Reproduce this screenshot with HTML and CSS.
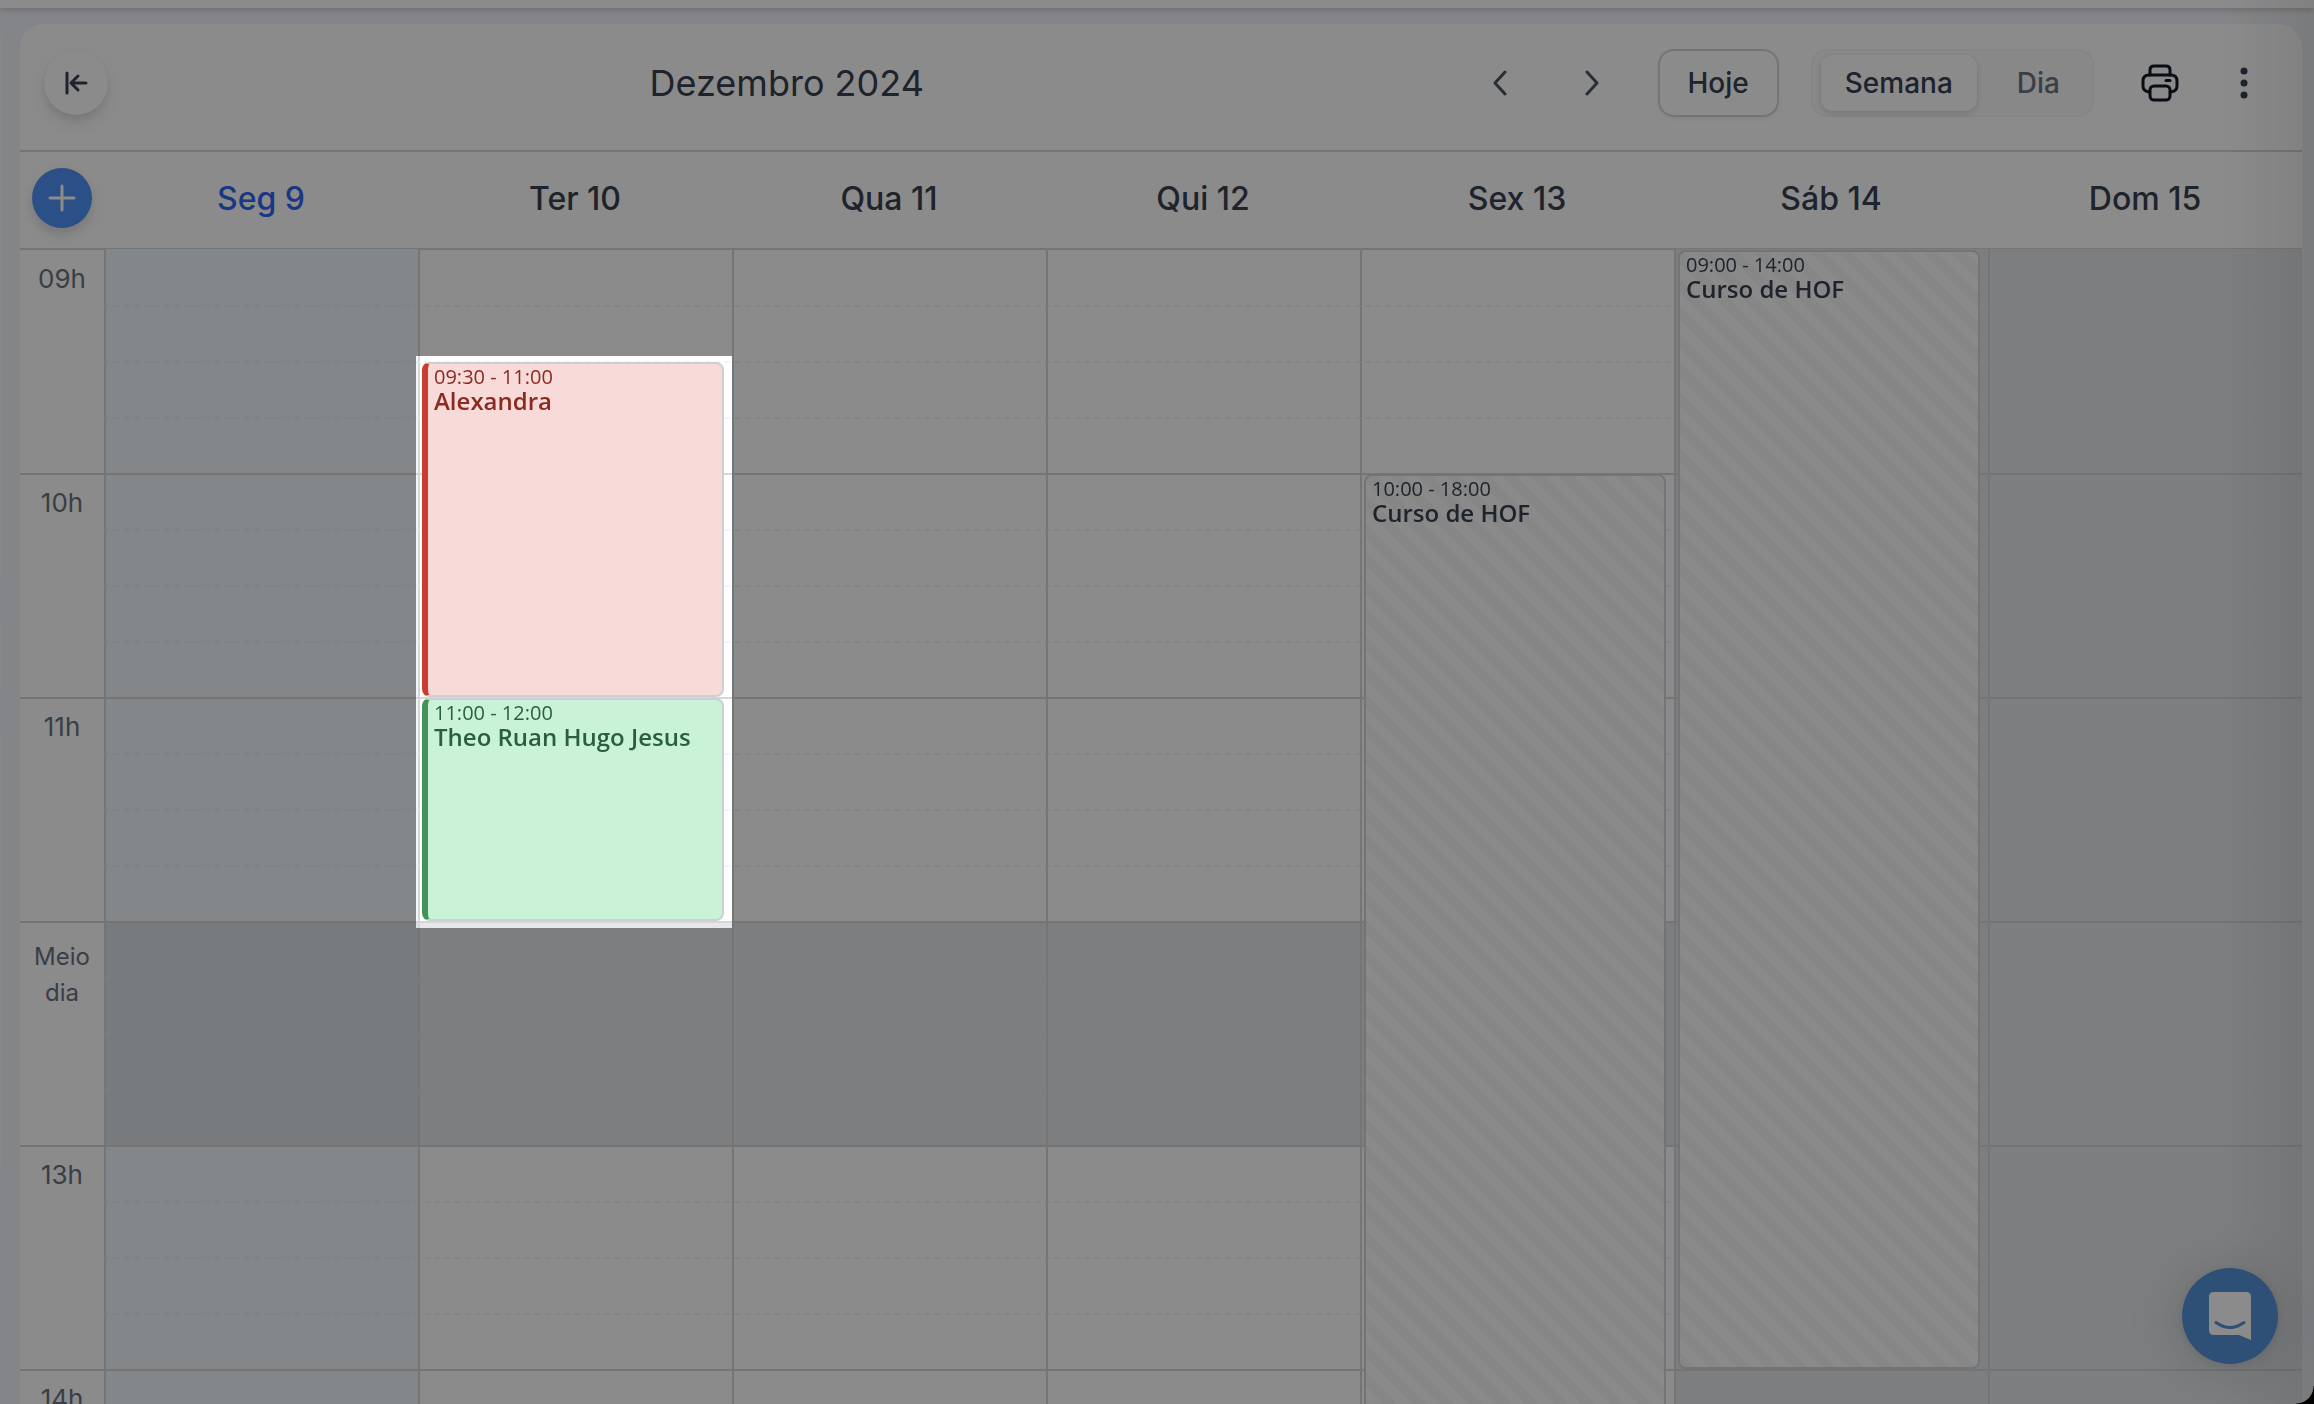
FILE: index.html
```
<!DOCTYPE html>
<html lang="pt-BR">
<head>
    <meta charset="UTF-8">
    <meta name="viewport" content="width=device-width, initial-scale=1.0">
    <title>Agenda</title>
    <link rel="stylesheet" href="styles.css">
</head>
<body>
    <div class="topbar"></div>
    <div class="page">
        <aside class="sidebar">
            <div class="panel"></div>
            <div class="panel small"></div>
            <div class="panel"></div>
        </aside>
        <main class="calendar">
            <header class="toolbar">
                <button type="button" class="btn-collapse" aria-label="Recolher menu">
                    <svg width="24" height="24" viewBox="0 0 24 24" fill="none" stroke="currentColor" stroke-width="3" stroke-linecap="round" stroke-linejoin="round">
                        <path d="M3 2v20M22 12H7M14 5l-7 7 7 7"/>
                    </svg>
                </button>
                <h1 class="title">Dezembro 2024</h1>
                <nav class="arrows">
                    <button type="button" class="btn-icon" aria-label="Semana anterior">
                        <svg width="16" height="26" viewBox="0 0 16 26" fill="none" stroke="currentColor" stroke-width="3" stroke-linecap="round" stroke-linejoin="round">
                            <path d="M13 2L3 13l10 11"/>
                        </svg>
                    </button>
                    <button type="button" class="btn-icon" aria-label="Próxima semana">
                        <svg width="16" height="26" viewBox="0 0 16 26" fill="none" stroke="currentColor" stroke-width="3" stroke-linecap="round" stroke-linejoin="round">
                            <path d="M3 2l10 11L3 24"/>
                        </svg>
                    </button>
                </nav>
                <button type="button" class="btn-today">Hoje</button>
                <div class="view-switch">
                    <button type="button" class="active">Semana</button>
                    <button type="button">Dia</button>
                </div>
                <div class="actions">
                    <button type="button" class="btn-icon btn-print" aria-label="Imprimir">
                        <svg width="38" height="38" viewBox="0 0 38 38" fill="none" stroke="currentColor" stroke-width="3" stroke-linecap="round" stroke-linejoin="round">
                            <path d="M9 11V6q0-4 4-4h12q4 0 4 4v5"/>
                            <path d="M8 28q-6-1-6-6v-5q0-6 6-6h22q6 0 6 6v5q0 5-6 6"/>
                            <rect x="9" y="22" width="20" height="14" rx="4"/>
                            <path d="M25 16.500h4"/>
                        </svg>
                    </button>
                    <button type="button" class="btn-icon btn-more" aria-label="Mais opções">
                        <svg width="8" height="32" viewBox="0 0 8 32" fill="currentColor">
                            <circle cx="4" cy="4" r="3.500"/>
                            <circle cx="4" cy="16" r="3.500"/>
                            <circle cx="4" cy="28" r="3.500"/>
                        </svg>
                    </button>
                </div>
            </header>

            <div class="days">
                <div class="add-cell">
                    <button type="button" class="btn-add" aria-label="Novo agendamento">
                        <svg width="28" height="28" viewBox="0 0 28 28" fill="none" stroke="currentColor" stroke-width="3" stroke-linecap="round">
                            <path d="M14 2v24M2 14h24"/>
                        </svg>
                    </button>
                </div>
                <div class="day today">Seg 9</div>
                <div class="day">Ter 10</div>
                <div class="day">Qua 11</div>
                <div class="day">Qui 12</div>
                <div class="day">Sex 13</div>
                <div class="day">Sáb 14</div>
                <div class="day">Dom 15</div>
            </div>

            <div class="week">
                <!-- fundo das colunas -->
                <div class="columns">
                    <div class="column is-today"><div class="lunch"></div></div>
                    <div class="column"><div class="lunch"></div></div>
                    <div class="column"><div class="lunch"></div></div>
                    <div class="column"><div class="lunch"></div></div>
                    <div class="column"><div class="lunch"></div></div>
                    <div class="column closed"></div>
                    <div class="column closed"></div>
                </div>

                <!-- horários, um tr a cada 15 min -->
                <table class="slots">
                    <tbody>
                        <tr><th rowspan="4" scope="rowgroup">09h</th><td></td></tr>
                        <tr><td></td></tr>
                        <tr><td></td></tr>
                        <tr><td></td></tr>
                    </tbody>
                    <tbody>
                        <tr><th rowspan="4" scope="rowgroup">10h</th><td></td></tr>
                        <tr><td></td></tr>
                        <tr><td></td></tr>
                        <tr><td></td></tr>
                    </tbody>
                    <tbody>
                        <tr><th rowspan="4" scope="rowgroup">11h</th><td></td></tr>
                        <tr><td></td></tr>
                        <tr><td></td></tr>
                        <tr><td></td></tr>
                    </tbody>
                    <tbody class="noon">
                        <tr><th rowspan="4" scope="rowgroup">Meio dia</th><td></td></tr>
                        <tr><td></td></tr>
                        <tr><td></td></tr>
                        <tr><td></td></tr>
                    </tbody>
                    <tbody>
                        <tr><th rowspan="4" scope="rowgroup">13h</th><td></td></tr>
                        <tr><td></td></tr>
                        <tr><td></td></tr>
                        <tr><td></td></tr>
                    </tbody>
                    <tbody>
                        <tr><th rowspan="4" scope="rowgroup">14h</th><td></td></tr>
                        <tr><td></td></tr>
                        <tr><td></td></tr>
                        <tr><td></td></tr>
                    </tbody>
                </table>

                <div class="events">
                    <article class="event red ter-0930">
                        <time>09:30 - 11:00</time>
                        <strong>Alexandra</strong>
                    </article>
                    <article class="event green ter-1100">
                        <time>11:00 - 12:00</time>
                        <strong>Theo Ruan Hugo Jesus</strong>
                    </article>
                    <article class="event blocked sex-1000">
                        <time>10:00 - 18:00</time>
                        <strong>Curso de HOF</strong>
                    </article>
                    <article class="event blocked sab-0900">
                        <time>09:00 - 14:00</time>
                        <strong>Curso de HOF</strong>
                    </article>
                    <div class="spotlight"></div>
                </div>
            </div>
        </main>
    </div>

    <div class="edge-shade"></div>
    <button type="button" class="chat" aria-label="Abrir chat">
        <svg width="42" height="48" viewBox="0 0 42 48">
            <path fill="#fff" d="M5 0h32q5 0 5 5v43l-12-5H5q-5 0-5-5V5q0-5 5-5z"/>
            <path fill="none" stroke="#5693d9" stroke-width="3" stroke-linecap="round" d="M7 30.500q14 10 28 0"/>
        </svg>
    </button>
    <div class="window-corner"></div>
</body>
</html>
```
FILE: styles.css
```
* {
    box-sizing: border-box;
}
body {
    margin: 0;
    height: 100vh;
    overflow: hidden;
    background-color: #f1f5f9;
    color: #374151;
    font-family: Inter, sans-serif;
}
button {
    display: flex;
    align-items: center;
    justify-content: center;
    padding: 0;
    border: none;
    background: none;
    color: inherit;
    font: inherit;
    cursor: pointer;
}
.topbar {
    height: 8px;
    background: white;
    box-shadow: 0 2px 6px rgba(0, 0, 0, 0.2);
}
.page {
    display: grid;
    grid-template-columns: 2px 1fr;
    gap: 18px;
    padding: 16px 12px 0 0;
}
.sidebar {
    display: flex;
    flex-direction: column;
    gap: 44px;
    height: 1142px;
    padding-top: 12px;
}
.panel {
    flex: 4;
    border-radius: 0 2px 2px 0;
    background: #f9fafb;
}
.panel:first-child {
    flex: 5;
}
.panel.small {
    flex: none;
    height: 68px;
}
.calendar {
    min-width: 0;
    background: white;
    border-radius: 24px 24px 0 0;
}

/* barra de ferramentas */
.toolbar {
    display: flex;
    align-items: center;
    gap: 32px;
    padding: 25px 24px 33px;
    border-bottom: 2px solid #d6d6d6;
}
.btn-collapse {
    width: 64px;
    height: 64px;
    border-radius: 50%;
    background: white;
    box-shadow: 0 8px 16px rgba(0, 0, 0, 0.09), 0 4px 6px rgba(0, 0, 0, 0.07);
}
.title {
    flex: 1;
    margin: 0 -32px;
    text-align: center;
    font-size: 36px;
    font-weight: 400;
}
.arrows {
    display: flex;
    gap: 24px;
    color: #4b5563;
}
.btn-icon {
    width: 68px;
    height: 68px;
}
.btn-today {
    height: 68px;
    padding: 0 28px;
    border: 2px solid #d1d5db;
    border-radius: 16px;
    box-shadow: 0 2px 4px rgba(0, 0, 0, 0.06);
    font-size: 28px;
    font-weight: 500;
}
.view-switch {
    display: flex;
    gap: 16px;
    height: 68px;
    padding: 4px 8px;
    border: 2px solid #f3f4f6;
    border-radius: 16px;
    background: #f9fafb;
    font-size: 28px;
    font-weight: 500;
    color: #6b7280;
}
.view-switch button {
    padding: 0 24px;
    border-radius: 12px;
}
.view-switch .active {
    background: white;
    color: #374151;
    box-shadow: 0 2px 6px rgba(0, 0, 0, 0.15);
}
.actions {
    display: flex;
    gap: 16px;
}
.btn-print {
    color: #111827;
}

/* cabeçalho dos dias */
.days {
    display: grid;
    grid-template-columns: 84px repeat(7, 1fr);
    align-items: center;
    height: 98px;
    padding-bottom: 4px;
    border-bottom: 2px solid #d6d6d6;
}
.add-cell {
    display: flex;
    justify-content: center;
}
.btn-add {
    width: 60px;
    height: 60px;
    border-radius: 50%;
    background: #4f91f8;
    color: white;
    box-shadow: 0 6px 12px rgba(0, 0, 0, 0.15);
}
.day {
    text-align: center;
    font-size: 32px;
    font-weight: 500;
}
.day.today {
    color: #2f66f0;
}

/* grade da semana: as três camadas ocupam a mesma célula */
.week {
    display: grid;
    margin-top: -1px;
}
.columns,
.slots,
.events {
    grid-area: 1 / 1;
    min-width: 0;
}
.columns,
.events {
    display: grid;
    grid-template-columns: repeat(7, 1fr);
    padding-left: 84px;
}
.column {
    display: grid;
    grid-template-rows: repeat(36, 56px);
    border-left: 2px solid #d6d6d6;
}
.lunch {
    grid-row: 13 / 17;
    background: #e5e7eb;
}
.is-today {
    background: #f0f8fc;
}
.is-today .lunch {
    background: #dbe2e7;
}
.closed {
    background: #e5e7eb;
}
.slots {
    align-self: start;
    width: 100%;
    table-layout: fixed;
    border-spacing: 0;
}
.slots tr {
    height: 56px;
}
.slots th {
    width: 84px;
    padding: 8px 12px;
    border-top: 2px solid #d6d6d6;
    vertical-align: top;
    font-size: 26px;
    font-weight: 400;
    line-height: 40px;
    color: #6b7280;
}
.slots .noon th {
    padding-top: 16px;
    font-size: 24px;
    line-height: 36px;
}
.slots td {
    padding: 0;
    border-top: 2px dashed rgba(229, 231, 240, 0.5);
}
.slots tr:first-child td {
    border-top: 2px solid #d6d6d6;
}
.slots tbody:first-child tr:first-child > * {
    border-top-color: transparent;
}
.events {
    grid-template-rows: repeat(36, 56px);
    z-index: 1;
}

.event {
    display: flex;
    flex-direction: column;
    margin: 1px 8px 0 4px;
    padding: 1px 6px;
    border: 2px solid #cdced1;
    border-radius: 8px;
    font-family: "Open Sans", sans-serif;
    line-height: 24px;
}
.event time {
    font-size: 20px;
}
.event strong {
    font-size: 24px;
    font-weight: 600;
}
.event.red {
    border-left: 6px solid #c93c2e;
    background: #f8dad8;
    color: #8b2a20;
}
.event.green {
    border-left: 6px solid #439356;
    background: #caf2d6;
    color: #2a5f3d;
}
.event.blocked {
    border-color: #d1d5db;
    background: repeating-linear-gradient(45deg, #f6f6f6 0 10px, #fefefe 10px 20px);
}
.ter-0930 {
    grid-area: 3 / 2 / 9;
}
.ter-1100 {
    grid-area: 9 / 2 / 13;
}
.sex-1000 {
    grid-area: 5 / 5 / 37;
}
.sab-0900 {
    grid-area: 1 / 6 / 21;
}

/* destaque do tour: escurece todo o resto da página */
.spotlight {
    grid-area: 3 / 2 / 13;
    z-index: 20;
    margin: -5px 0 -7px -2px;
    box-shadow: 0 0 0 3000px rgba(0, 0, 0, 0.455);
    pointer-events: none;
}

.edge-shade {
    position: fixed;
    top: 0;
    right: 0;
    bottom: 0;
    width: 90px;
    background: linear-gradient(to right, transparent, rgba(0, 0, 0, 0.08));
    pointer-events: none;
}
.chat {
    position: fixed;
    right: 36px;
    bottom: 40px;
    width: 96px;
    height: 96px;
    border-radius: 50%;
    background: #5693d9;
    box-shadow: 0 2px 12px rgba(0, 0, 0, 0.1), 0 4px 60px rgba(0, 0, 0, 0.15);
}
.window-corner {
    position: fixed;
    right: 0;
    bottom: 0;
    z-index: 30;
    width: 18px;
    height: 18px;
    background: radial-gradient(circle at 0 0, transparent 17px, black 18px);
}
```
